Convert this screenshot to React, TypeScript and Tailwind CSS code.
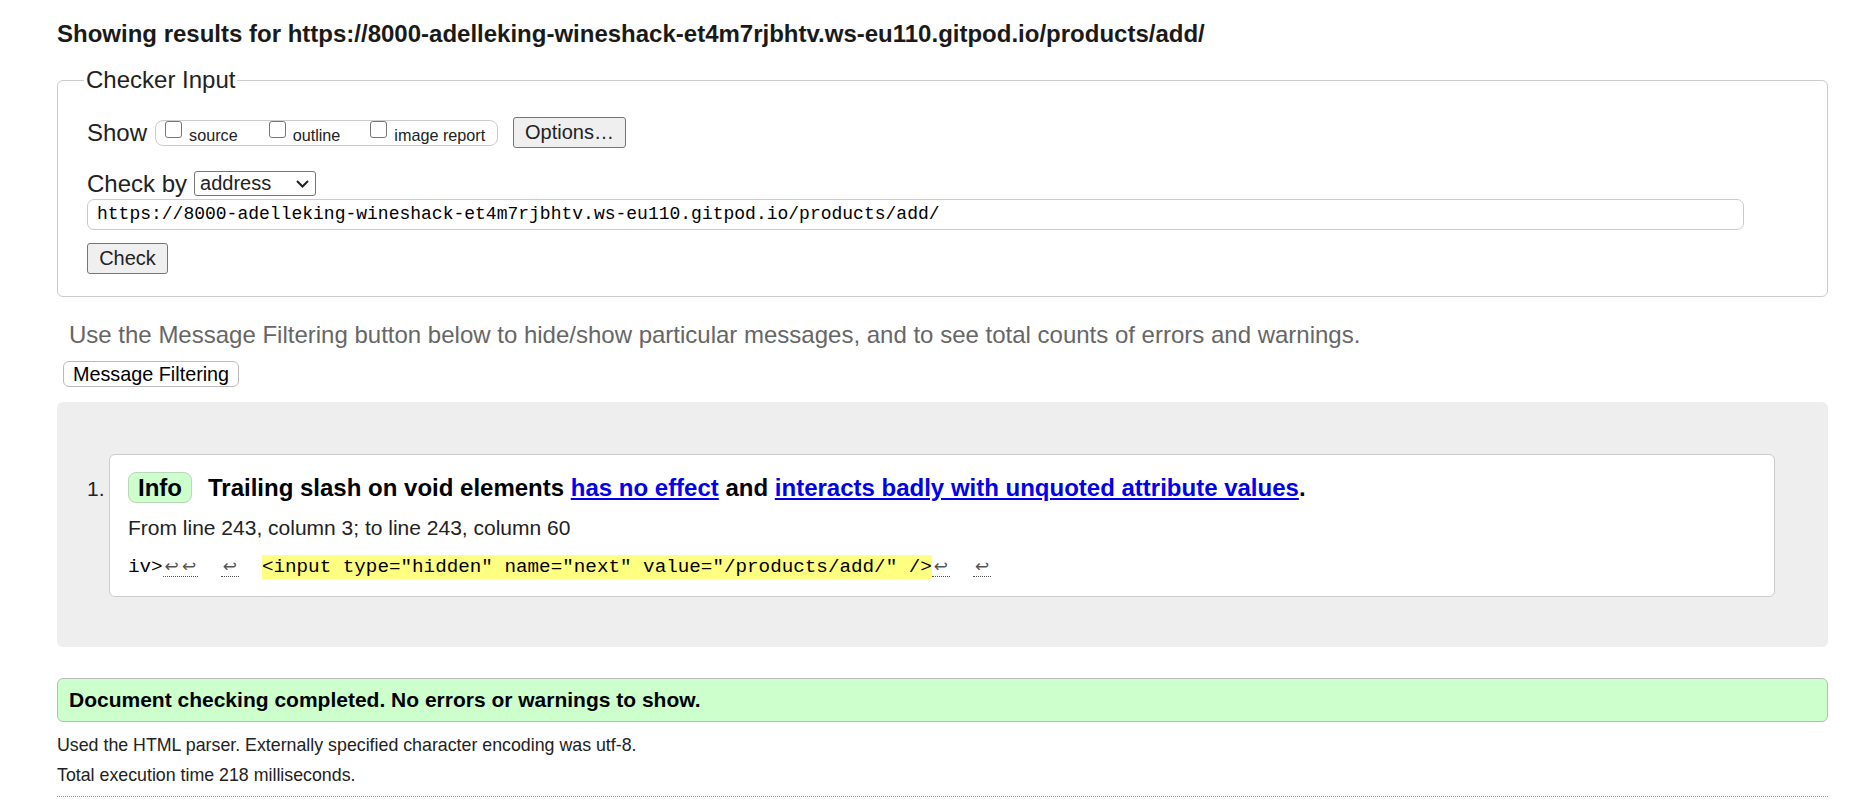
import React from 'react';

const url = 'https://8000-adelleking-wineshack-et4m7rjbhtv.ws-eu110.gitpod.io/products/add/';

function Box({ label }: { label: string }) {
  return (
    <>
      <span className="w-[17px] h-[17px] shrink-0 border border-[#767676] rounded-[3px] bg-white" />
      <span className="ml-[7px] mt-[5px] text-[16.2px] leading-[18px]">{label}</span>
    </>
  );
}

function Arrow({ children }: { children: React.ReactNode }) {
  return (
    <span className="inline-flex justify-center text-[#555] border-b border-dotted border-[#555] leading-[19px] font-['DejaVu_Sans',sans-serif] text-[17px]">
      {children}
    </span>
  );
}

export default function App() {
  return (
    <div className="min-h-[801px] bg-white pl-[57px] pr-[26px] text-[#222] font-['Liberation_Sans',Arial,sans-serif]">
      <h2 className="pt-[20px] text-[24px] leading-[28px] font-bold text-[#1a1a1a]">
        Showing results for {url}
      </h2>

      <fieldset className="mt-[18px] border border-[#ccc] rounded-[6px] pl-[29px] pt-[23px] pb-[22px]">
        <legend className="-ml-[3px] px-[2px] text-[24px] leading-[28px]">Checker Input</legend>

        {/* show options */}
        <div className="flex items-center h-[31px]">
          <span className="text-[24px] leading-[31px] -mt-[1px]">Show</span>
          <div className="ml-[8px] flex items-start h-[26px] border border-[#ccc] rounded-[8px] pl-[9px] pr-[9px] w-[343px]">
            <Box label="source" />
            <span className="ml-[31px]" />
            <Box label="outline" />
            <span className="ml-[30px]" />
            <Box label="image report" />
          </div>
          <button className="ml-[15px] h-[31px] px-[11px] bg-[#efefef] border border-[#767676] rounded-[3px] text-[20px] leading-[29px]">
            Options…
          </button>
        </div>

        <div className="mt-[23px] flex items-center h-[25px]">
          <span className="text-[24px] leading-[25px] -mt-[1px]">Check by</span>
          <div className="ml-[7px] w-[122px] h-[25px] flex items-center justify-between border border-[#767676] rounded-[3px] pl-[5px] pr-[5px]">
            <span className="text-[20px] leading-[23px]">address</span>
            <svg width="13" height="8" viewBox="0 0 13 8" className="mr-[1px]">
              <polyline points="1,1 6.5,6.5 12,1" fill="none" stroke="#222" strokeWidth="2" />
            </svg>
          </div>
        </div>

        <div className="mt-[3px] w-[1657px] h-[31px] flex items-center border border-[#ccc] rounded-[7px] pl-[9px] font-['Liberation_Mono',monospace] text-[18px] text-black">
          {url}
        </div>

        <button className="mt-[13px] block h-[31px] w-[81px] bg-[#efefef] border border-[#767676] rounded-[3px] text-[20px] leading-[29px]">
          Check
        </button>
      </fieldset>

      <p className="mt-[25px] ml-[12px] text-[24px] leading-[26px] text-[#666]">
        Use the Message Filtering button below to hide/show particular messages, and to see total counts of errors and warnings.
      </p>
      <button className="mt-[13px] ml-[6px] block h-[26px] px-[9px] bg-white border border-[#bbb] rounded-[6px] text-[19.8px] leading-[24px] text-black">
        Message Filtering
      </button>

      {/* messages */}
      <div className="mt-[15px] bg-[#eee] rounded-[6px] pt-[52px] pb-[50px] pl-[30px] pr-[53px] flex items-baseline">
        <span className="w-[22px] shrink-0 text-[21px]">1.</span>
        <div className="flex-1 bg-white border border-[#ccc] rounded-[6px] pt-[17px] pl-[18px] pb-[17px]">
          <div className="flex items-center h-[31px] text-black">
            <span className="h-[31px] px-[9px] flex items-center bg-[#ccffcc] border border-[#b8d8b8] rounded-[8px] text-[24px] font-bold">
              Info
            </span>
            <span className="ml-[16px] text-[24px] font-bold">
              Trailing slash on void elements{' '}
              <a className="text-[#0000ee] underline">has no effect</a> and{' '}
              <a className="text-[#0000ee] underline">interacts badly with unquoted attribute values</a>.
            </span>
          </div>
          <p className="mt-[13px] text-[21px] leading-[24px]">From line 243, column 3; to line 243, column 60</p>
          <p className="mt-[16px] leading-[23px] font-['Liberation_Mono',monospace] text-[19.25px] text-black whitespace-pre">
            iv&gt;<Arrow><span className="w-[18px] text-center">↩</span><span className="w-[17px] text-center">↩</span></Arrow>
            {'  '}
            <Arrow><span className="w-[18px] text-center">↩</span></Arrow>
            {'  '}
            <span className="bg-[#ffff80] py-[1px]">&lt;input type="hidden" name="next" value="/products/add/" /&gt;</span>
            <Arrow><span className="w-[18px] text-center">↩</span></Arrow>
            {'  '}
            <Arrow><span className="w-[18px] text-center">↩</span></Arrow>
          </p>
        </div>
      </div>

      <div className="mt-[31px] h-[44px] flex items-center bg-[#ccffcc] border border-[#bbb] rounded-[6px] pl-[11px] text-[21px] font-bold text-black">
        Document checking completed. No errors or warnings to show.
      </div>

      <p className="mt-[10px] text-[17.8px] leading-[27px]">Used the HTML parser. Externally specified character encoding was utf-8.</p>
      <p className="mt-[3px] text-[17.8px] leading-[27px]">Total execution time 218 milliseconds.</p>
      <div className="mt-[7px] border-t border-dotted border-[#999]" />
    </div>
  );
}
